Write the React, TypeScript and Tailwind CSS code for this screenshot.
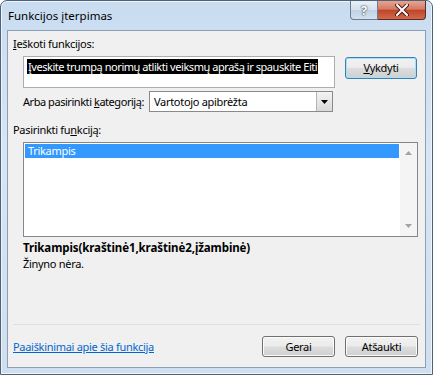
import React from 'react';

const font = { fontFamily: '"Noto Sans", "Open Sans", sans-serif' };

const Btn: React.FC<{ children: React.ReactNode; primary?: boolean; className?: string }> = ({ children, primary, className }) => (
  <div
    className={
      'flex items-center justify-center rounded-[3px] border text-[11px] text-black ' +
      (primary
        ? 'border-[#3c7fb1] shadow-[inset_0_0_0_1px_#a6e1fb] '
        : 'border-[#707070] shadow-[inset_0_0_0_1px_#fbfbfb] ') +
      'bg-[linear-gradient(to_bottom,#f2f2f2_0%,#ebebeb_48%,#dddddd_52%,#cfcfcf_100%)] ' +
      (className ?? '')
    }
  >
    {children}
  </div>
);

const App: React.FC = () => {
  return (
    <div className="w-[433px] h-[375px] bg-white" style={font}>
      <div className="flex h-full w-full flex-col rounded-t-[7px] border border-[#4d6278] bg-[linear-gradient(to_bottom,#c9dcf0_0%,#d7e5f4_40%,#cfdff0_100%)] shadow-[inset_0_0_0_1px_#eef4fb]">
        {/* Title bar */}
        <div className="flex h-[29px] items-start">
          <div className="whitespace-nowrap pl-[7px] pt-[7px] text-[11.5px] leading-[16px] text-black">Funkcijos įterpimas</div>
          <div className="ml-auto mr-[6px] flex">
            <div className="flex h-[19px] w-[28px] items-center justify-center rounded-bl-[4px] border border-t-0 border-[#6b7c8f] bg-[linear-gradient(to_bottom,#e9f0f7_0%,#d5e1ee_50%,#c2d2e4_52%,#d3e1ef_100%)] text-[13px] font-bold leading-none text-white [text-shadow:0_0_2px_#2a3b4d,0_0_1px_#2a3b4d]">
              ?
            </div>
            <div className="flex h-[19px] w-[48px] items-center justify-center rounded-br-[4px] border border-l-0 border-t-0 border-[#5b2a20] bg-[linear-gradient(to_bottom,#e8a493_0%,#d47a63_45%,#c0452a_52%,#d06a4c_100%)]">
              <svg width="14" height="12" viewBox="0 0 14 12">
                <path d="M2 1 L12 11 M12 1 L2 11" stroke="#4a1c12" strokeWidth="4" strokeLinecap="round" />
                <path d="M2 1 L12 11 M12 1 L2 11" stroke="#ffffff" strokeWidth="2" strokeLinecap="round" />
              </svg>
            </div>
          </div>
        </div>

        {/* Client area */}
        <div className="mx-[6px] mb-[6px] flex flex-1 flex-col whitespace-nowrap border border-[#8e9fb3] bg-[#f0f0f0] text-[11px] leading-[14px] tracking-[-0.3px] text-black">
          <div className="ml-[5px] mt-[6px]">
            <u>I</u>eškoti funkcijos:
          </div>

          <div className="ml-[15px] mt-[5px] flex items-start">
            <div className="h-[32px] w-[312px] overflow-hidden border border-[#abadb3] bg-white pl-[3px] pt-[2px]">
              <span className="bg-black px-[1px] leading-[15px] tracking-[-0.45px] text-white">
                Įveskite trumpą norimų atlikti veiksmų aprašą ir spauskite Eiti
              </span>
            </div>
            <Btn primary className="ml-[10px] mt-[1px] h-[22px] w-[72px]">
              <span>
                <u>V</u>ykdyti
              </span>
            </Btn>
          </div>

          <div className="ml-[15px] mt-[3px] flex items-center">
            <div className="w-[126px] tracking-[-0.45px]">
              Arba pasirinkti <u>k</u>ategoriją:
            </div>
            <div className="flex h-[21px] w-[184px] items-center border border-[#8a8a8a] bg-white">
              <div className="flex-1 pl-[4px]">Vartotojo apibrėžta</div>
              <div className="flex h-[19px] w-[16px] items-center justify-center border-l border-[#b5b5b5] bg-[linear-gradient(to_bottom,#f3f3f3,#d9d9d9)]">
                <svg width="7" height="4" viewBox="0 0 7 4">
                  <path d="M0 0 L7 0 L3.5 4 Z" fill="#000" />
                </svg>
              </div>
            </div>
          </div>

          <div className="ml-[5px] mt-[11px]">
            Pasirinkti fu<u>n</u>kciją:
          </div>

          <div className="ml-[15px] mt-[5px] flex h-[95px] w-[395px] border border-[#828790] bg-white">
            <div className="flex-1 p-[1px]">
              <div className="h-[14px] bg-[#3399ff] pl-[3px] leading-[14px] text-white">Trikampis</div>
            </div>
            <div className="flex w-[17px] flex-col items-center justify-between bg-[#f4f4f4] py-[8px]">
              <svg width="7" height="4" viewBox="0 0 7 4">
                <path d="M0 4 L7 4 L3.5 0 Z" fill="#a3a3a3" />
              </svg>
              <svg width="7" height="4" viewBox="0 0 7 4">
                <path d="M0 0 L7 0 L3.5 4 Z" fill="#a3a3a3" />
              </svg>
            </div>
          </div>

          <div className="ml-[15px] mt-[3px] text-[11.5px] font-bold leading-[16px] tracking-[-0.1px]">
            Trikampis(kraštinė1,kraštinė2,įžambinė)
          </div>
          <div className="ml-[15px] leading-[16px]">Žinyno nėra.</div>

          <div className="mx-[5px] mt-auto border-t border-[#dfdfdf]" />

          <div className="mb-[10px] ml-[5px] mr-[7px] mt-[11px] flex items-center">
            <span className="text-[#0066cc] underline">Paaiškinimai apie šia funkcija</span>
            <Btn className="ml-auto h-[21px] w-[73px]">Gerai</Btn>
            <Btn className="ml-[10px] h-[21px] w-[73px]">Atšaukti</Btn>
          </div>
        </div>
      </div>
    </div>
  );
};

export default App;
